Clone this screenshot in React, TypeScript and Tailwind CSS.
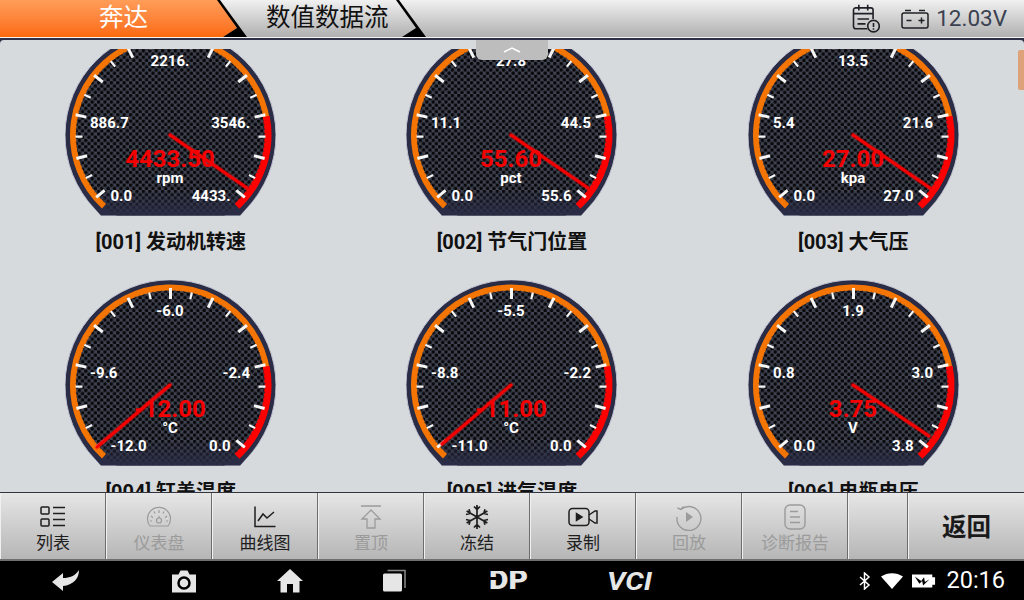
import * as React from "react";

type Gauge = {
  id: string;
  name: string;
  value: string;
  unit: string;
  low: string;
  midL: string;
  top: string;
  midR: string;
  high: string;
  tip: [number, number];
};

const gauges: Gauge[] = [
  { id: "g1", name: "[001] 发动机转速", value: "4433.50", unit: "rpm", low: "0.0", midL: "886.7", top: "2216.", midR: "3546.", high: "4433.", tip: [182, 158] },
  { id: "g2", name: "[002] 节气门位置", value: "55.60", unit: "pct", low: "0.0", midL: "11.1", top: "27.8", midR: "44.5", high: "55.6", tip: [182, 158] },
  { id: "g3", name: "[003] 大气压", value: "27.00", unit: "kpa", low: "0.0", midL: "5.4", top: "13.5", midR: "21.6", high: "27.0", tip: [182, 158] },
  { id: "g4", name: "[004] 缸盖温度", value: "-12.00", unit: "°C", low: "-12.0", midL: "-9.6", top: "-6.0", midR: "-2.4", high: "0.0", tip: [32, 167] },
  { id: "g5", name: "[005] 进气温度", value: "-11.00", unit: "°C", low: "-11.0", midL: "-8.8", top: "-5.5", midR: "-2.2", high: "0.0", tip: [36, 164] },
  { id: "g6", name: "[006] 电瓶电压", value: "3.75", unit: "V", low: "0.0", midL: "0.8", top: "1.9", midR: "3.0", high: "3.8", tip: [181, 156] },
];

const CX = 105.5;
const CY = 105;

function polar(deg: number, r: number) {
  const a = (deg * Math.PI) / 180;
  return [CX + r * Math.sin(a), CY - r * Math.cos(a)];
}

function arc(from: number, to: number, r: number) {
  const [x1, y1] = polar(from, r);
  const [x2, y2] = polar(to, r);
  return `M${x1} ${y1}A${r} ${r} 0 ${to - from > 180 ? 1 : 0} 1 ${x2} ${y2}`;
}

const shape = `M30 179A105.5 105.5 0 1 1 181 179L175 185.5H36Z`;

function Dial({ g }: { g: Gauge }) {
  const ticks = Array.from({ length: 21 }, (_, i) => -130 + i * 13);
  const notches = Array.from({ length: 101 }, (_, i) => -135 + i * 2.7);
  return (
    <svg width="211" height="186" viewBox="0 0 211 186" className="block">
      <defs>
        <pattern id={`${g.id}-p`} width="6.4" height="6.4" patternUnits="userSpaceOnUse">
          <rect width="6.4" height="6.4" fill="#3f4350" />
          <circle cx="1.6" cy="1.6" r="1.8" fill="#08080b" />
          <circle cx="4.8" cy="4.8" r="1.8" fill="#08080b" />
        </pattern>
        <linearGradient id={`${g.id}-f`} x1="0" y1="0" x2="0" y2="1">
          <stop offset="0" stopColor="#2a2c45" stopOpacity="0" />
          <stop offset="0.86" stopColor="#2a2c45" stopOpacity="0" />
          <stop offset="1" stopColor="#2a2c45" stopOpacity="1" />
        </linearGradient>
        <clipPath id={`${g.id}-c`}>
          <path d={shape} />
        </clipPath>
      </defs>
      <path d={shape} fill="#2a2c45" stroke="#bfc2d0" strokeWidth="1" />
      <g clipPath={`url(#${g.id}-c)`}>
        <circle cx={CX} cy={CY} r="97" fill={`url(#${g.id}-p)`} />
        <rect x="0" y="0" width="211" height="186" fill={`url(#${g.id}-f)`} />
      </g>
      <path d={arc(-137, 82, 97.5)} fill="none" stroke="#f47503" strokeWidth="6" />
      <path d={arc(79, 137, 97.5)} fill="none" stroke="#ff0000" strokeWidth="7" />
      {notches.map((d) => {
        const [x1, y1] = polar(d, 93.5);
        const [x2, y2] = polar(d, 95);
        return <line key={d} x1={x1} y1={y1} x2={x2} y2={y2} stroke="#2a2c45" strokeWidth="0.8" />;
      })}
      {ticks.map((d, i) => {
        const major = i % 2 === 0;
        const [x1, y1] = polar(d, major ? 97 : 95);
        const [x2, y2] = polar(d, major ? 86 : 88);
        return <line key={d} x1={x1} y1={y1} x2={x2} y2={y2} stroke="#f6f6f6" strokeWidth={major ? 3 : 2.2} />;
      })}
      <g fontFamily="Roboto, sans-serif" fontWeight="700" fontSize="15" fill="#ffffff">
        <text x="45.500" y="171">{g.low}</text>
        <text x="25" y="98">{g.midL}</text>
        <text x="105" y="35.500" textAnchor="middle">{g.top}</text>
        <text x="185" y="98" textAnchor="end">{g.midR}</text>
        <text x="165.500" y="171" textAnchor="end">{g.high}</text>
        <text x="105" y="153" textAnchor="middle" fontSize="15">{g.unit}</text>
      </g>
      <line x1="105" y1="105" x2={g.tip[0]} y2={g.tip[1]} stroke="#ff0000" strokeOpacity="0.3" strokeWidth="5" strokeLinecap="round" />
      <text x="105" y="137" textAnchor="middle" fontFamily="Roboto, sans-serif" fontWeight="700" fontSize="24" fill="#f40000">
        {g.value}
      </text>
      <line x1="105" y1="105" x2={g.tip[0]} y2={g.tip[1]} stroke="#f40000" strokeWidth="3" strokeLinecap="round" />
    </svg>
  );
}

function Chevron() {
  return (
    <svg width="30" height="37" viewBox="0 0 30 37" className="absolute right-0 top-0">
      <path d="M0 0H3L30 37H6L20 28Z" fill="#000" />
    </svg>
  );
}

function CalendarIcon() {
  return (
    <svg width="29" height="32" viewBox="0 0 32 36" fill="none" stroke="#1f2026" strokeWidth="1.800">
      <path d="M18 29H5a2.500 2.500 0 0 1-2.500-2.500V8A2.500 2.500 0 0 1 5 5.500h17A2.500 2.500 0 0 1 24.500 8v10" />
      <path d="M8.500 2v6.500M18.500 2v6.500M2.500 12h22M7 18h13M7 23.500h9" />
      <circle cx="25" cy="26" r="6.500" fill="#c9c9c9" />
      <path d="M25 22.500v4.500M25 28.500v1.500" strokeWidth="1.800" />
    </svg>
  );
}

function BatteryIcon() {
  return (
    <svg width="28" height="20" viewBox="0 0 28 20" fill="none" stroke="#1f2026" strokeWidth="1.500">
      <rect x="1" y="4" width="26" height="15" rx="2" />
      <path d="M4 1.500h6M18 1.500h6M5.500 11.500h5M17.500 11.500h6M20.500 8.500v6" />
    </svg>
  );
}

const tools: { label: string; off?: boolean; icon: React.ReactNode }[] = [
  {
    label: "列表",
    icon: (
      <svg width="26" height="24" viewBox="0 0 26 24" fill="none" stroke="currentColor" strokeWidth="1.500">
        <rect x="1" y="2" width="8" height="7" rx="1" />
        <rect x="1" y="14" width="8" height="7" rx="1" />
        <path d="M13 2.500h12M13 8.500h12M13 14.500h12M13 20.500h12" />
      </svg>
    ),
  },
  {
    label: "仪表盘",
    off: true,
    icon: (
      <svg width="26" height="24" viewBox="0 0 26 24" fill="none" stroke="currentColor" strokeWidth="1.200">
        <path d="M4 21a11.500 11.500 0 1 1 18 0Z" />
        <circle cx="13" cy="15.500" r="2.500" />
        <path d="M13 5v3M13 11v2M5 11l2 1.500M21 11l-2 1.500M4 16h2M20 16h2M8 6.500l1 2M18 6.500l-1 2" />
      </svg>
    ),
  },
  {
    label: "曲线图",
    icon: (
      <svg width="24" height="24" viewBox="0 0 24 24" fill="none" stroke="currentColor" strokeWidth="1.500">
        <path d="M2 1.500v20h20.500M5 16l5-7 4 4 7-6" />
      </svg>
    ),
  },
  {
    label: "置顶",
    off: true,
    icon: (
      <svg width="24" height="26" viewBox="0 0 24 26" fill="none" stroke="currentColor" strokeWidth="1.300">
        <path d="M2 2h20M12 6l-9 9h5v9h8v-9h5Z" />
      </svg>
    ),
  },
  {
    label: "冻结",
    icon: (
      <svg width="26" height="26" viewBox="0 0 26 26" fill="none" stroke="currentColor" strokeWidth="1.700">
        <path d="M13 1v24M2.600 7l20.800 12M2.600 19L23.400 7M10 2.500l3 3 3-3M10 23.500l3-3 3 3M2 10.500l4.200-1-1.200-4.200M24 15.500l-4.200 1 1.200 4.200M2 15.500l4.200 1-1.200 4.200M24 10.500l-4.200-1 1.200-4.200" />
      </svg>
    ),
  },
  {
    label: "录制",
    icon: (
      <svg width="30" height="20" viewBox="0 0 30 20" fill="none" stroke="currentColor" strokeWidth="1.500">
        <rect x="1" y="1.500" width="20" height="17" rx="3.500" />
        <path d="M8.500 6.500v7l5.500-3.500Z" fill="currentColor" />
        <path d="M21 8l6-4h2v12h-2l-6-4" />
      </svg>
    ),
  },
  {
    label: "回放",
    off: true,
    icon: (
      <svg width="28" height="28" viewBox="0 0 28 28" fill="none" stroke="currentColor" strokeWidth="1.400">
        <path d="M6 6.500A12 12 0 1 1 2 14" />
        <path d="M2.500 5l3.500 1.500L8.500 3.500" />
        <path d="M11 9v10l7-5Z" fill="currentColor" stroke="none" />
      </svg>
    ),
  },
  {
    label: "诊断报告",
    off: true,
    icon: (
      <svg width="22" height="26" viewBox="0 0 22 26" fill="none" stroke="currentColor" strokeWidth="1.400">
        <rect x="1" y="1" width="20" height="24" rx="5" />
        <path d="M6 7.500h8M6 13h10M6 18.500h10" />
      </svg>
    ),
  },
];

export default function App() {
  return (
    <div className="flex h-[600px] w-[1024px] flex-col overflow-hidden bg-black font-['Roboto','Noto_Sans_CJK_SC',sans-serif]">
      <header className="flex h-[38px] items-start bg-gradient-to-b from-[#f1f1f1] to-[#b0b0b0] border-b border-[#f4f4f4]">
        <div className="relative h-[37px] w-[247px]">
          <div className="flex h-full items-center justify-center text-[24.500px] text-white bg-gradient-to-b from-[#ff9d58] to-[#fb6a08] [clip-path:polygon(0_0,218px_0,237px_28px,223px_37px,0_37px)]">
            奔达
          </div>
          <Chevron />
        </div>
        <div className="relative -ml-[21px] flex h-[37px] w-[200px] items-center pl-[40px] text-[24.500px] text-[#111111]">
          数值数据流
          <Chevron />
        </div>
        <div className="ml-auto flex h-[37px] items-center pr-[17px]">
          <CalendarIcon />
          <div className="ml-[21px] mr-[7px] pt-[1px]">
            <BatteryIcon />
          </div>
          <span className="text-[22.500px] text-[#3a4150]">12.03V</span>
        </div>
      </header>
      <main className="relative flex-1 overflow-hidden bg-[#2e3046] pt-[2px]">
        <div className="h-full rounded-t-[4px] bg-[#d7dadd] pt-[9px]">
          <div className="h-[443px] overflow-hidden">
            <div className="-mt-[19.500px] grid w-[1024px] grid-cols-3">
              {gauges.map((g) => (
                <div key={g.id} className="flex h-[250px] flex-col items-center">
                  <Dial g={g} />
                  <div className="mt-[14px] text-[20px] font-bold leading-[24px] text-[#111111]">{g.name}</div>
                </div>
              ))}
            </div>
          </div>
        </div>
        <div className="absolute left-[476px] top-[2px] flex h-[20px] w-[72px] justify-center rounded-b-[6px] bg-[#bdbdbd] pt-[6px]">
          <svg width="20" height="7" viewBox="0 0 20 7" fill="none" stroke="#fff" strokeWidth="1.500">
            <path d="M2 6l8-4 8 4" />
          </svg>
        </div>
        <div className="absolute right-0 top-[12px] h-[40px] w-[6px] rounded-l-[2px] bg-[#dda27a]" />
      </main>
      <nav className="flex h-[69px] border-t border-[#34343c] border-b-2 border-b-[#6f6f6f] bg-gradient-to-b from-[#e6e6e6] to-[#b6b6b6]">
        {tools.map((t) => (
          <button
            key={t.label}
            className={`flex w-[106px] flex-col items-center border-l border-l-[#f0f0f0] border-r border-r-[#6d6d6d] ${t.off ? "text-[#9b9b9b]" : "text-[#1e1e1e]"}`}
          >
            <div className="flex h-[38px] items-center justify-center pt-[10px]">{t.icon}</div>
            <span className="text-[17px] leading-[24px]">{t.label}</span>
          </button>
        ))}
        <div className="w-[60px] border-l border-l-[#f0f0f0] border-r border-r-[#6d6d6d]" />
        <button className="flex flex-1 items-center justify-center border-l border-l-[#f0f0f0] pt-[5px] text-[24.500px] font-bold text-[#1a1a1a]">
          返回
        </button>
      </nav>
      <footer className="relative flex h-[39px] items-center text-[#e6e6e6]">
        <div className="ml-[52px] flex w-[28px] justify-center">
          <svg width="28" height="22" viewBox="0 0 28 22" fill="currentColor">
            <path d="M0 12L11 3v5c7 0 12-2 16-8 0 9-6 15-16 16v5Z" />
          </svg>
        </div>
        <div className="ml-[91px] flex w-[26px] justify-center">
          <svg width="26" height="24" viewBox="0 0 26 24">
            <path d="M1 5.500h6.500L9.500 1.500h7l2 4H25v18H1Z" fill="currentColor" />
            <circle cx="13" cy="14" r="5.500" fill="none" stroke="#000" strokeWidth="2.500" />
          </svg>
        </div>
        <div className="ml-[80px] flex w-[26px] justify-center">
          <svg width="26" height="24" viewBox="0 0 26 24" fill="currentColor">
            <path d="M13 0L26 12h-3.500v11.500H16V15h-6v8.500H3.500V12H0Z" />
          </svg>
        </div>
        <div className="ml-[79px] flex w-[24px] justify-center">
          <svg width="24" height="24" viewBox="0 0 24 24">
            <path d="M5.500 1.500H23V19" fill="none" stroke="#8a8a8a" strokeWidth="1.500" />
            <rect x="1" y="4.500" width="19" height="18" rx="1.500" fill="currentColor" />
          </svg>
        </div>
        <div className="relative ml-[82px] flex h-[20px] w-[41px] items-center justify-center overflow-hidden text-[25px] font-black leading-none [transform:scaleX(1.2)]">
          DP
          <div className="absolute left-0 top-[6px] h-[3px] w-[12px] bg-black" />
          <div className="absolute left-[1px] top-[1px] h-[4px] w-[2px] bg-black" />
        </div>
        <div className="ml-[79px] w-[43px] text-center text-[26px] font-bold italic leading-none [transform:scaleX(1.12)]">VCI</div>
        <div className="ml-auto flex items-center pr-[19px]">
          <svg width="12" height="18" viewBox="0 0 12 18" fill="none" stroke="#fff" strokeWidth="1.500">
            <path d="M1 5l9 8-4.500 4V1L10 5l-9 8" />
          </svg>
          <svg width="22" height="16" viewBox="0 0 22 16" fill="#fff" className="ml-[10px]">
            <path d="M0 3.500C6.500-1 15.500-1 22 3.500L11 16Z" />
          </svg>
          <svg width="24" height="14" viewBox="0 0 26 14" className="ml-[9px]">
            <path d="M0 0h22v3h3v8h-3v3H0Z" fill="#fff" />
            <path d="M3 2l7 5 3-4 1 5 5-3-7 7-1-5-3 3Z" fill="#000" />
          </svg>
          <span className="ml-[10px] text-[23.500px] leading-none text-white">20:16</span>
        </div>
      </footer>
    </div>
  );
}
